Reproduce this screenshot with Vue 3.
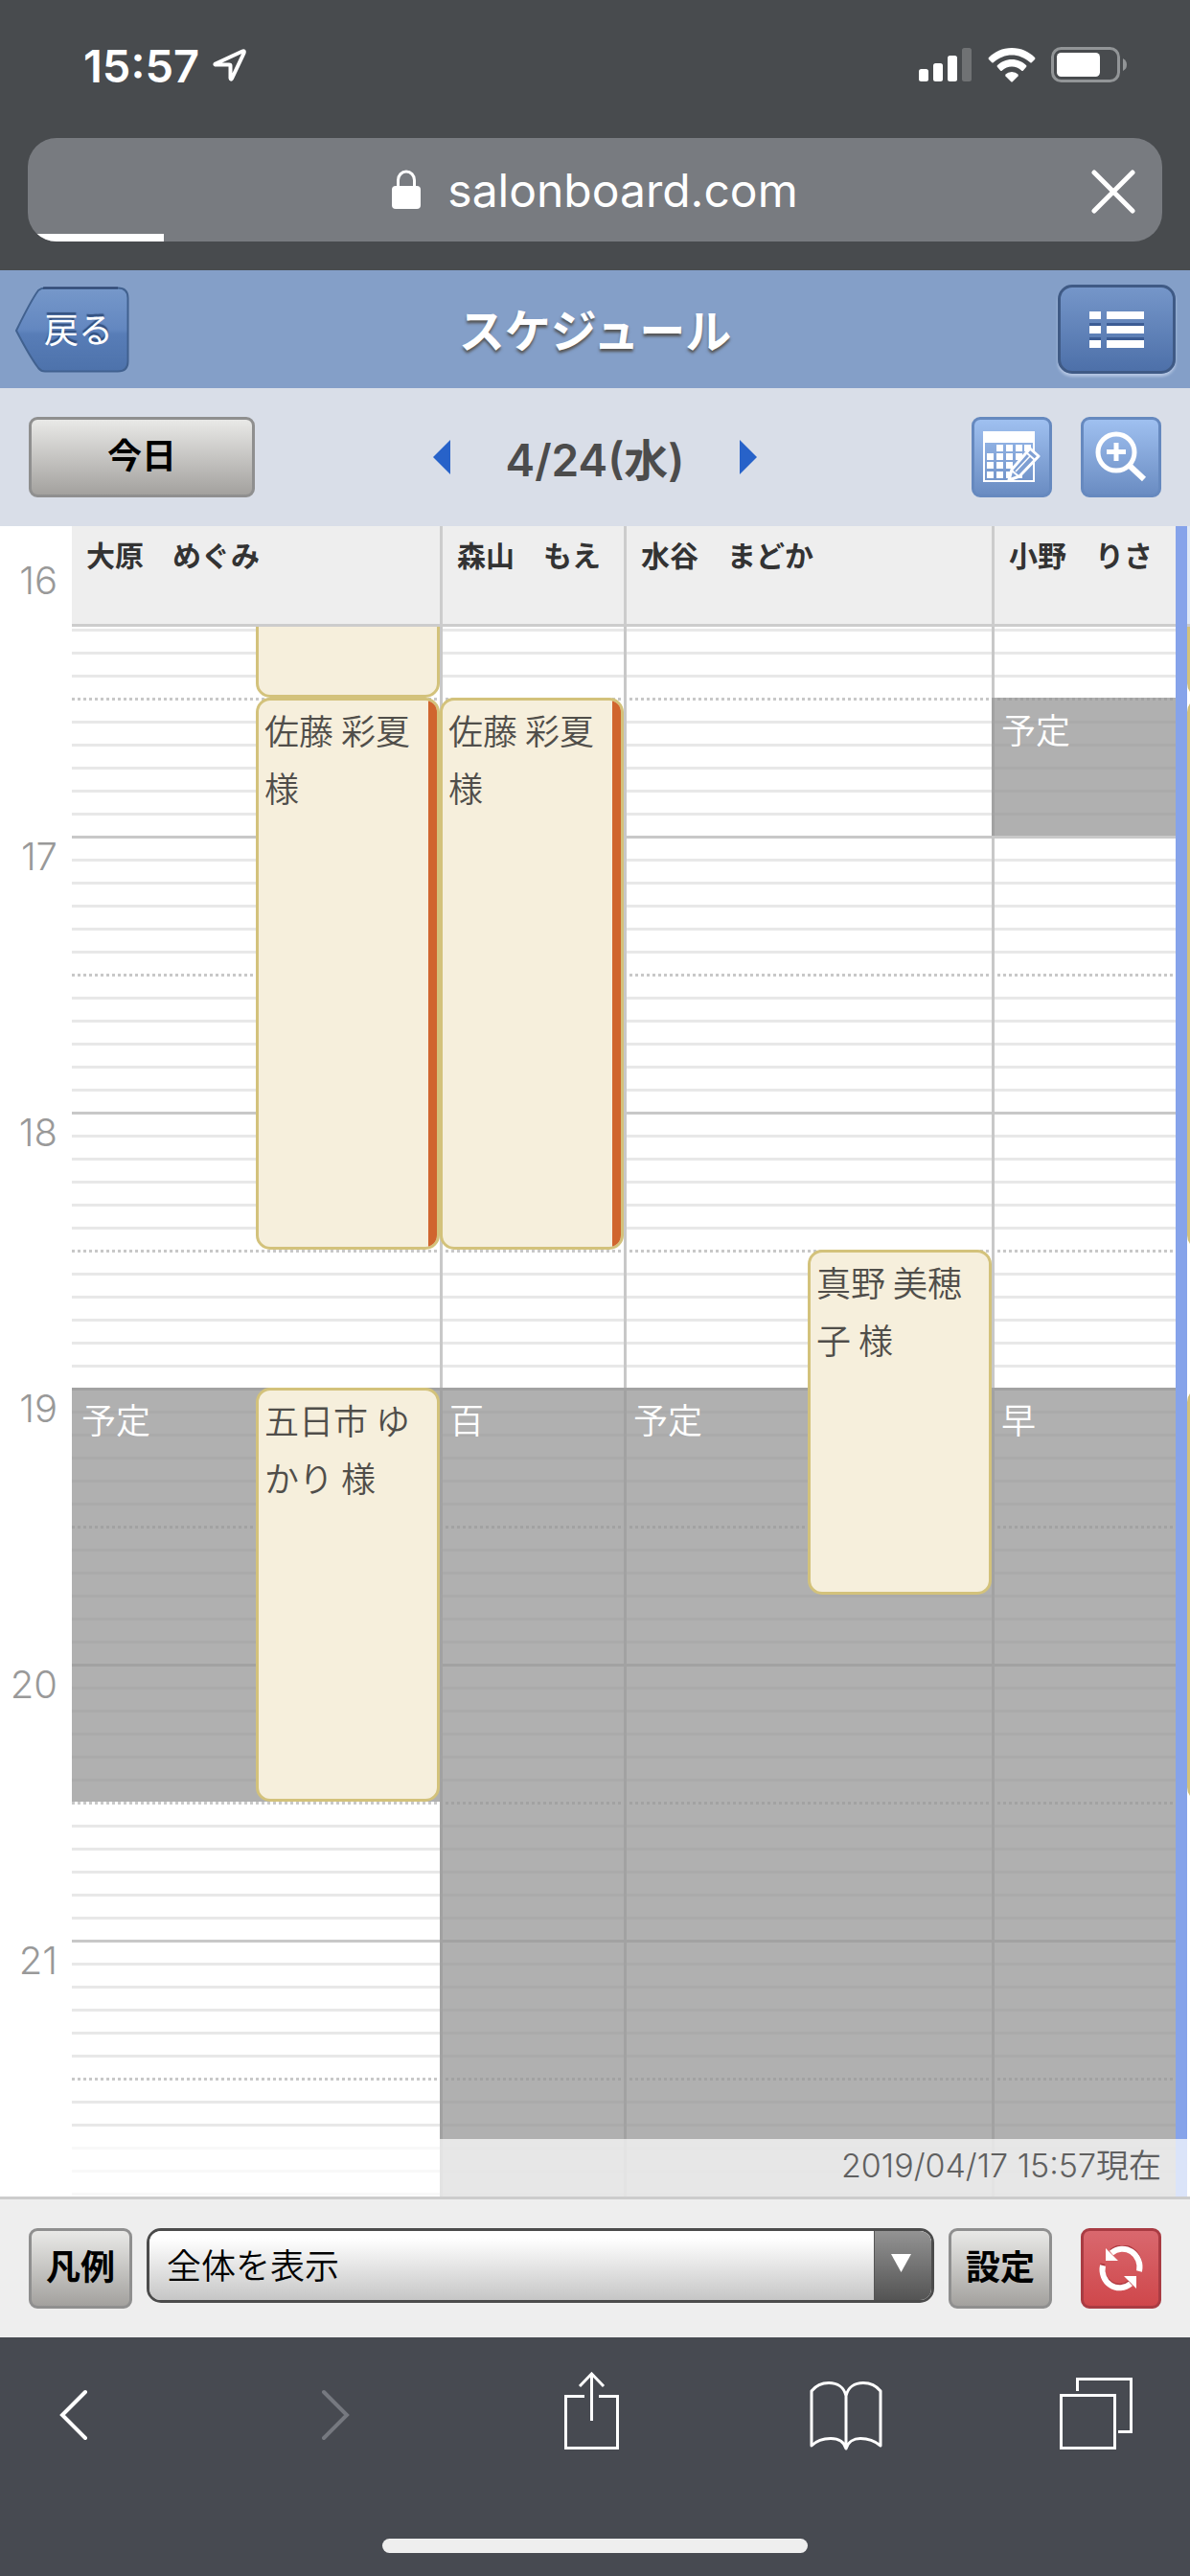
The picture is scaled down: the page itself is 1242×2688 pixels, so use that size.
<script setup>
import { ref } from 'vue'

const view = ref('all')
const hours = [16, 17, 18, 19, 20, 21]

// One grid row per five minutes; the first row is 16:10.
const FIRST = 16 * 60 + 10
const ROWS = 70
const toRow = (t) => {
  const [h, m] = t.split(':').map(Number)
  return (h * 60 + m - FIRST) / 5 + 1
}
const slots = Array.from({ length: ROWS }, (_, i) => {
  const minute = (FIRST + i * 5) % 60
  return minute === 0 ? 'hour' : minute === 30 ? 'half' : 'minor'
})

const staff = [
  {
    name: '大原　めぐみ',
    lanes: 2,
    items: [
      { type: 'booking', lane: 2, from: '16:10', to: '16:30', text: '' },
      { type: 'booking', lane: 2, from: '16:30', to: '18:30', text: '佐藤 彩夏 様', mark: true },
      { type: 'block', lane: 1, span: 2, from: '19:00', to: '20:30', text: '予定' },
      { type: 'booking', lane: 2, from: '19:00', to: '20:30', text: '五日市 ゆかり 様' }
    ]
  },
  {
    name: '森山　もえ',
    lanes: 1,
    items: [
      { type: 'booking', lane: 1, from: '16:30', to: '18:30', text: '佐藤 彩夏 様', mark: true },
      { type: 'block', lane: 1, from: '19:00', to: '22:00', text: '百' }
    ]
  },
  {
    name: '水谷　まどか',
    lanes: 2,
    items: [
      { type: 'block', lane: 1, span: 2, from: '19:00', to: '22:00', text: '予定' },
      { type: 'booking', lane: 2, from: '18:30', to: '19:45', text: '真野 美穂子 様' }
    ]
  },
  {
    name: '小野　りさ',
    lanes: 1,
    items: [
      { type: 'block', lane: 1, from: '16:30', to: '17:00', text: '予定' },
      { type: 'block', lane: 1, from: '19:00', to: '22:00', text: '早' }
    ]
  }
]
const nextItems = [
  { from: '16:10', to: '16:30' },
  { from: '16:30', to: '18:30' },
  { from: '19:00', to: '20:30' }
]

const place = (i) => ({
  gridRow: `${toRow(i.from)} / ${toRow(i.to)}`,
  gridColumn: i.lane ? `${i.lane} / span ${i.span || 1}` : '1'
})
</script>

<template>
  <div class="page">
    <header class="browser-top">
      <div class="status">
        <span class="clock">15:57</span>
        <svg class="locate" width="36" height="36" viewBox="0 0 36 36" aria-hidden="true">
          <path d="M3 16.500 31 3.500Q33.500 2.500 32.500 5.500L20 32Q19 33.500 18.500 31.500V18.500Q18.500 17.500 17 17.500H4Q1.500 17.500 3 16.500Z" fill="none" stroke="#fff" stroke-width="4" stroke-linejoin="round" />
        </svg>
        <div class="signals">
          <svg width="56" height="36" viewBox="0 0 56 36" aria-hidden="true">
            <rect x="0" y="22" width="10" height="13" rx="2.500" fill="#fff" />
            <rect x="15" y="16" width="10" height="19" rx="2.500" fill="#fff" />
            <rect x="30" y="8" width="10" height="27" rx="2.500" fill="#fff" />
            <rect x="45" y="0" width="10" height="35" rx="2.500" fill="#fff" opacity=".22" />
          </svg>
          <svg width="50" height="36" viewBox="0 0 50 36" aria-hidden="true">
            <path d="M25 0C35 0 43 4 49 10Q50 11 49 12L46 15Q45 16 44 15C38 10 32 7.500 25 7.500S12 10 6 15Q5 16 4 15L1 12Q0 11 1 10C7 4 15 0 25 0Z" fill="#fff" />
            <path d="M25 12C31 12 36 14.500 40 18Q41 19 40 20L37 23.500Q36 24.500 35 23.500C32 21 29 19.500 25 19.500S18 21 15 23.500Q14 24.500 13 23.500L10 20Q9 19 10 18C14 14.500 19 12 25 12Z" fill="#fff" />
            <path d="M25 25Q29 25 31.500 27.500Q32 28.500 31.500 29.500L26 35Q25 36 24 35L18.500 29.500Q18 28.500 18.500 27.500Q21 25 25 25Z" fill="#fff" />
          </svg>
          <svg width="80" height="38" viewBox="0 0 80 38" aria-hidden="true">
            <rect x="1.500" y="1.500" width="69" height="34" rx="9" fill="none" stroke="#929597" stroke-width="3" />
            <rect x="6" y="6" width="45" height="25" rx="4.500" fill="#fff" />
            <path d="M75 12Q79 14 79 18.500T75 25Z" fill="#929597" />
          </svg>
        </div>
      </div>
      <div class="address">
        <svg class="lock" width="30" height="42" viewBox="0 0 30 42" aria-hidden="true">
          <path d="M6.500 18V11a8.500 9 0 0 1 17 0V18" fill="none" stroke="#fff" stroke-width="3" />
          <rect x="0" y="17" width="30" height="24" rx="4" fill="#fff" />
        </svg>
        <span class="domain">salonboard.com</span>
        <button class="stop" type="button" aria-label="読み込みを中止">
          <svg width="46" height="46" viewBox="0 0 46 46"><path d="M3 3 43 43M43 3 3 43" stroke="#fff" stroke-width="5" stroke-linecap="round" /></svg>
        </button>
        <span class="progress"></span>
      </div>
    </header>

    <div class="title-bar">
      <button class="back" type="button">
        <svg class="back-shape" width="120" height="90" viewBox="0 0 120 90" aria-hidden="true">
          <defs>
            <linearGradient id="backFill" x1="0" y1="0" x2="0" y2="1">
              <stop offset="0" stop-color="#7698ca" />
              <stop offset=".5" stop-color="#6387c0" />
              <stop offset=".55" stop-color="#587db7" />
              <stop offset="1" stop-color="#4d72ab" />
            </linearGradient>
          </defs>
          <path d="M2 46Q17 15 25 4 28 1.500 32 1.500H108Q118.500 1.500 118.500 12V78Q118.500 88.500 108 88.500H32Q28 88.500 25 85 16 73 2 46Z" fill="url(#backFill)" stroke="#41618f" stroke-width="2" />
          <path d="M30 1.500H108" stroke="#2e4670" stroke-width="2" />
        </svg>
        <span class="back-text">戻る</span>
      </button>
      <h1>スケジュール</h1>
      <button class="menu" type="button" aria-label="メニュー">
        <svg width="58" height="38" viewBox="0 0 58 38">
          <g fill="#3c5c94"><path d="M0 12h12v3H0zM18 12h39v3H18zM0 27h12v3H0zM18 27h39v3H18z" /></g>
          <g fill="#fff"><path d="M0 0h12v8H0zM18 0h39v8H18zM0 15h12v8H0zM18 15h39v8H18zM0 30h12v8H0zM18 30h39v8H18z" /></g>
        </svg>
      </button>
    </div>

    <div class="date-bar">
      <button class="grey-btn today" type="button">今日</button>
      <div class="date-nav">
        <button class="arrow" type="button" aria-label="前の日">
          <svg width="18" height="36" viewBox="0 0 18 36"><path d="M18 0V36L0 18Z" fill="#2762c9" /></svg>
        </button>
        <strong class="date">4/24(水)</strong>
        <button class="arrow" type="button" aria-label="次の日">
          <svg width="18" height="36" viewBox="0 0 18 36"><path d="M0 0V36L18 18Z" fill="#2762c9" /></svg>
        </button>
      </div>
      <div class="tools">
        <button class="blue-btn" type="button" aria-label="予定を登録">
          <svg width="60" height="54" viewBox="0 0 60 54">
            <rect x="1" y="1" width="52" height="51" fill="none" stroke="#fff" stroke-width="2" />
            <rect x="0" y="0" width="54" height="12" fill="#fff" />
            <path fill="#fff" d="M14 14h7v7h-7zM24 14h7v7h-7zM34 14h7v7h-7zM43 14h7v7h-7zM4 23h7v7H4zM14 23h7v7h-7zM24 23h7v7h-7zM34 23h7v7h-7zM4 32h7v7H4zM14 32h7v7h-7zM24 32h7v7h-7zM4 42h7v7H4zM14 42h7v7h-7zM24 42h7v7h-7zM34 42h7v7h-7z" />
            <path d="M49 18 58 26 38 47 27 51 30 40Z" fill="#7e9fd3" stroke="#fff" stroke-width="3" stroke-linejoin="round" />
            <path d="M45 22l9 8M30 41l7 6" fill="none" stroke="#fff" stroke-width="2" />
            <path d="M34 42 49 26" fill="none" stroke="#fff" stroke-width="1.500" />
          </svg>
        </button>
        <button class="blue-btn" type="button" aria-label="拡大">
          <svg width="54" height="54" viewBox="0 0 54 54">
            <circle cx="22" cy="22" r="19" fill="none" stroke="#fff" stroke-width="5" />
            <path d="M22 12V31M12 21.500H32" stroke="#fff" stroke-width="5" />
            <path d="M35 35 51 50" stroke="#fff" stroke-width="6" />
          </svg>
        </button>
      </div>
    </div>

    <main class="schedule">
      <div class="hours">
        <div v-for="h in hours" :key="h" class="hour-label">{{ h }}</div>
      </div>
      <div class="board">
        <div class="heads">
          <div v-for="s in staff" :key="s.name" class="head">{{ s.name }}</div>
        </div>
        <div class="body">
          <div class="lines">
            <i v-for="(kind, i) in slots" :key="i" :class="kind"></i>
          </div>
          <div v-for="s in staff" :key="s.name" class="column" :class="{ double: s.lanes === 2 }">
            <div
              v-for="(item, i) in s.items"
              :key="i"
              :class="[item.type, { mark: item.mark }]"
              :style="place(item)"
            >{{ item.text }}</div>
          </div>
        </div>
      </div>
      <div class="divider"></div>
      <div class="next">
        <div class="next-head"></div>
        <div class="next-body">
          <div v-for="(item, i) in nextItems" :key="i" class="booking" :style="place(item)"></div>
        </div>
      </div>
      <p class="stamp">2019/04/17 15:57現在</p>
    </main>

    <div class="action-bar">
      <button class="grey-btn square" type="button">凡例</button>
      <div class="select">
        <select v-model="view" aria-label="表示の切り替え">
          <option value="all">全体を表示</option>
        </select>
        <span class="select-arrow">
          <svg width="22" height="20" viewBox="0 0 22 20"><path d="M0 0H21L10.500 19Z" fill="#fff" /></svg>
        </span>
      </div>
      <button class="grey-btn square" type="button">設定</button>
      <button class="red-btn" type="button" aria-label="更新">
        <svg width="48" height="48" viewBox="0 0 48 48">
          <g fill="none" stroke="#b03a42" stroke-width="5" transform="translate(0 -2)">
            <path d="M14 8A18 19 0 0 1 43 27M5 21A18 19 0 0 0 34 40" />
          </g>
          <path d="M14 8A18 19 0 0 1 43 27M5 21A18 19 0 0 0 34 40" fill="none" stroke="#fff" stroke-width="6" />
          <path d="M8 3V16H21ZM40 45V32H27Z" fill="#fff" />
        </svg>
      </button>
    </div>

    <footer class="browser-bottom">
      <nav class="nav">
        <button type="button" aria-label="戻る">
          <svg width="30" height="82" viewBox="0 0 30 82"><path d="M27 21 3 45 27 69" fill="none" stroke="#fff" stroke-width="4" stroke-linecap="round" /></svg>
        </button>
        <button type="button" aria-label="進む">
          <svg width="30" height="82" viewBox="0 0 30 82"><path d="M3 21 27 45 3 69" fill="none" stroke="#767980" stroke-width="4" stroke-linecap="round" /></svg>
        </button>
        <button type="button" aria-label="共有">
          <svg width="58" height="82" viewBox="0 0 58 82"><path d="M21 25.500H1.500V79.500H55.500V25.500H36M28.500 51V3M16 15 28.500 2 41 15" fill="none" stroke="#fff" stroke-width="3" /></svg>
        </button>
        <button type="button" aria-label="ブックマーク">
          <svg width="76" height="82" viewBox="0 0 76 82"><path d="M38 80V25C36 16 29 11.500 20 11.500 12 11.500 6 15 2 20V77C7 72 14 69.500 22 69.500 30 69.500 36 73 38 80 40 73 46 69.500 53 69.500 61 69.500 68 72 74 77V20C70 15 64 11.500 56 11.500 47 11.500 40 16 38 25" fill="none" stroke="#fff" stroke-width="3" stroke-linejoin="round" /></svg>
        </button>
        <button type="button" aria-label="タブ">
          <svg width="76" height="82" viewBox="0 0 76 82"><path d="M1.500 24.500H57.500V79.500H1.500ZM18.500 20V7.500H74.500V62.500H61" fill="none" stroke="#fff" stroke-width="3" /></svg>
        </button>
      </nav>
      <div class="home-bar"></div>
    </footer>
  </div>
</template>

<style>
body {
  margin: 0;
}
</style>

<style scoped>
.page {
  height: 100vh;
  display: flex;
  flex-direction: column;
  background: #fff;
  color: #333;
  font-family: "Noto Sans CJK JP", sans-serif;
  font-size: 36px;
}
.page * {
  box-sizing: border-box;
}
button {
  margin: 0;
  padding: 0;
  border: 0;
  background: none;
  font: inherit;
  color: inherit;
}
svg {
  display: block;
}

.browser-top {
  flex: none;
  background: #484b4e;
  padding: 0 29px 30px;
  color: #fff;
  font-family: Inter, sans-serif;
}
.status {
  height: 144px;
  padding: 0 36px 8px 58px;
  display: flex;
  align-items: center;
}
.clock {
  font-size: 47px;
  font-weight: 600;
}
.locate {
  margin-left: 14px;
}
.signals {
  margin-left: auto;
  display: flex;
  align-items: center;
  gap: 16px;
}
.address {
  position: relative;
  height: 108px;
  border-radius: 30px;
  overflow: hidden;
  background: #787b80;
  display: flex;
  align-items: center;
  justify-content: center;
  gap: 28px;
}
.domain {
  font-size: 48px;
}
.stop {
  position: absolute;
  top: 33px;
  right: 28px;
}
.progress {
  position: absolute;
  left: 0;
  bottom: 0;
  width: 12%;
  height: 8px;
  background: #fff;
}

.title-bar {
  flex: none;
  height: 123px;
  padding: 0 15px;
  display: grid;
  grid-template-columns: 1fr auto 1fr;
  align-items: center;
  background: #849fc8;
}
.back {
  position: relative;
  width: 120px;
  height: 90px;
  padding: 0 0 4px 14px;
  color: #fff;
  line-height: 86px;
  text-shadow: 0 -3px 1px #33507f;
}
.back-shape {
  position: absolute;
  inset: 0;
}
.back-text {
  position: relative;
}
h1 {
  margin: 0;
  padding-bottom: 4px;
  color: #fff;
  font-size: 48px;
  font-weight: 700;
  line-height: 60px;
  text-shadow: 0 3px 3px #555;
}
.menu {
  justify-self: end;
  width: 123px;
  height: 93px;
  border: 3px solid #3f5a85;
  border-radius: 15px;
  background: linear-gradient(#7596c9, #4d70a9);
  box-shadow: 0 3px 3px #b3c5e2;
  display: flex;
  align-items: center;
  justify-content: center;
}

.date-bar {
  flex: none;
  height: 144px;
  padding: 0 30px;
  display: grid;
  grid-template-columns: 1fr auto 1fr;
  align-items: center;
  background: #d9dee8;
}
.grey-btn {
  height: 84px;
  border: 3px solid #8f8f8f;
  border-radius: 9px;
  background: linear-gradient(#e9e9e7, #a3a19e);
  color: #000;
  font-weight: 700;
  line-height: 70px;
  padding-bottom: 8px;
}
.today {
  width: 236px;
}
.date-nav {
  display: flex;
  align-items: center;
  gap: 58px;
}
.date {
  color: #4c4c4c;
  font-family: Inter, "Noto Sans CJK JP", sans-serif;
  font-size: 46px;
  font-weight: 600;
}
.tools {
  display: flex;
  justify-content: flex-end;
  gap: 30px;
}
.blue-btn,
.red-btn {
  flex: none;
  width: 84px;
  height: 84px;
  border: 3px solid #6689bf;
  border-radius: 9px;
  background: linear-gradient(#9fc0f0, #6a8cc2);
  display: flex;
  align-items: center;
  justify-content: center;
}
.red-btn {
  margin-left: 30px;
  border-color: #a93c43;
  background: linear-gradient(#d9686e, #cf474b);
}

.schedule {
  position: relative;
  flex: 1;
  min-height: 0;
  display: flex;
  overflow: hidden;
}
.hours {
  flex: none;
  width: 75px;
  padding: 35px 15px 0 0;
  text-align: right;
  color: #999;
  font-family: Inter, sans-serif;
  font-size: 40px;
  font-weight: 300;
}
.hour-label {
  height: 288px;
  line-height: 44px;
}
.board {
  flex: 1;
  min-width: 0;
  display: flex;
  flex-direction: column;
}
.heads,
.body {
  display: grid;
  grid-template-columns: minmax(0, 2fr) minmax(0, 1fr) minmax(0, 2fr) minmax(0, 1fr);
}
.heads {
  flex: none;
  height: 105px;
  border-bottom: 3px solid #ccc;
  background: #eee;
}
.head {
  padding: 7px 0 0 15px;
  font-size: 30px;
  font-weight: 700;
  line-height: 44px;
  white-space: nowrap;
}
.head + .head {
  border-left: 3px solid #ccc;
}
.body {
  flex: 1;
  min-height: 0;
  overflow: hidden;
  grid-template-rows: 100%;
}
.lines,
.column,
.next-body {
  margin-top: -22px;
  display: grid;
  grid-template-rows: repeat(70, 24px);
}
.lines {
  grid-area: 1 / 1 / 2 / -1;
}
.lines i {
  height: 3px;
  background: #e8e8e8;
}
.lines .hour {
  background: #c8c8c8;
}
.lines .half {
  background: repeating-linear-gradient(90deg, #c8c8c8 0 3px, transparent 3px 6px);
}
.column {
  grid-row: 1;
}
.column:nth-child(2) { grid-column: 1; }
.column:nth-child(3) { grid-column: 2; }
.column:nth-child(4) { grid-column: 3; }
.column:nth-child(5) { grid-column: 4; }
.double {
  grid-template-columns: 1fr 1fr;
}
.column:nth-child(n + 3) {
  background: linear-gradient(#c8c8c8, #c8c8c8) 0 0 / 3px 100% no-repeat;
}
.booking,
.block {
  font-weight: 350;
  line-height: 58px;
}
.booking {
  position: relative;
  border: 3px solid #d3c27b;
  border-radius: 15px;
  background: #f6efdc;
  padding: 0 6px;
  color: #504e4a;
  line-height: 60px;
  overflow: hidden;
}
.mark::after {
  content: "";
  position: absolute;
  top: 0;
  right: 0;
  bottom: 0;
  width: 9px;
  background: #d0652e;
}
.block {
  padding: 3px 10px;
  background: rgba(150, 150, 150, 0.75);
  color: #fff;
}
.divider {
  flex: none;
  width: 12px;
  background: #86a3ea;
}
.next {
  flex: none;
  width: 3px;
  overflow: hidden;
}
.next-head {
  position: relative;
  z-index: 1;
  height: 105px;
  background: #dfe8f6;
  border-bottom: 3px solid #ccc;
}
.next-body {
  width: 192px;
}
.stamp {
  position: absolute;
  left: 0;
  right: 0;
  bottom: 0;
  z-index: 2;
  margin: 0;
  padding: 0 30px 4px 0;
  background: rgba(255, 255, 255, 0.7);
  color: #606060;
  font-family: Inter, "Noto Sans CJK JP", sans-serif;
  font-size: 34px;
  font-weight: 350;
  line-height: 56px;
  text-align: right;
}

.action-bar {
  flex: none;
  height: 147px;
  padding: 30px 30px 0;
  border-top: 3px solid #ccc;
  background: #eee;
  display: flex;
  align-items: flex-start;
}
.square {
  flex: none;
  width: 108px;
}
.select {
  flex: 1;
  height: 78px;
  margin: 0 15px;
  border: 3px solid #4b4b4b;
  border-radius: 15px;
  overflow: hidden;
  display: flex;
  position: relative;
}
select {
  appearance: none;
  width: 100%;
  margin: 0;
  padding: 0 80px 4px 18px;
  border: 0;
  border-radius: 0;
  background: linear-gradient(#fff 10%, #c6c6c6);
  color: #000;
  font: inherit;
  font-weight: 350;
}
.select-arrow {
  position: absolute;
  top: 0;
  right: 0;
  bottom: 0;
  width: 60px;
  padding: 24px 0 0 17px;
  border-left: 1px solid #555;
  background: linear-gradient(#939393, #545454);
  pointer-events: none;
}

.browser-bottom {
  flex: none;
  height: 249px;
  padding-top: 36px;
  background: #474a51;
}
.nav {
  display: grid;
  grid-template-columns: 215fr 270fr 266fr 263fr 228fr;
  justify-items: center;
}
.nav button:first-child {
  justify-self: start;
  margin-left: 62px;
}
.nav button:last-child {
  justify-self: end;
  margin-right: 60px;
}
.home-bar {
  width: 444px;
  height: 15px;
  margin: 92px auto 0;
  border-radius: 8px;
  background: #eee;
}
</style>
